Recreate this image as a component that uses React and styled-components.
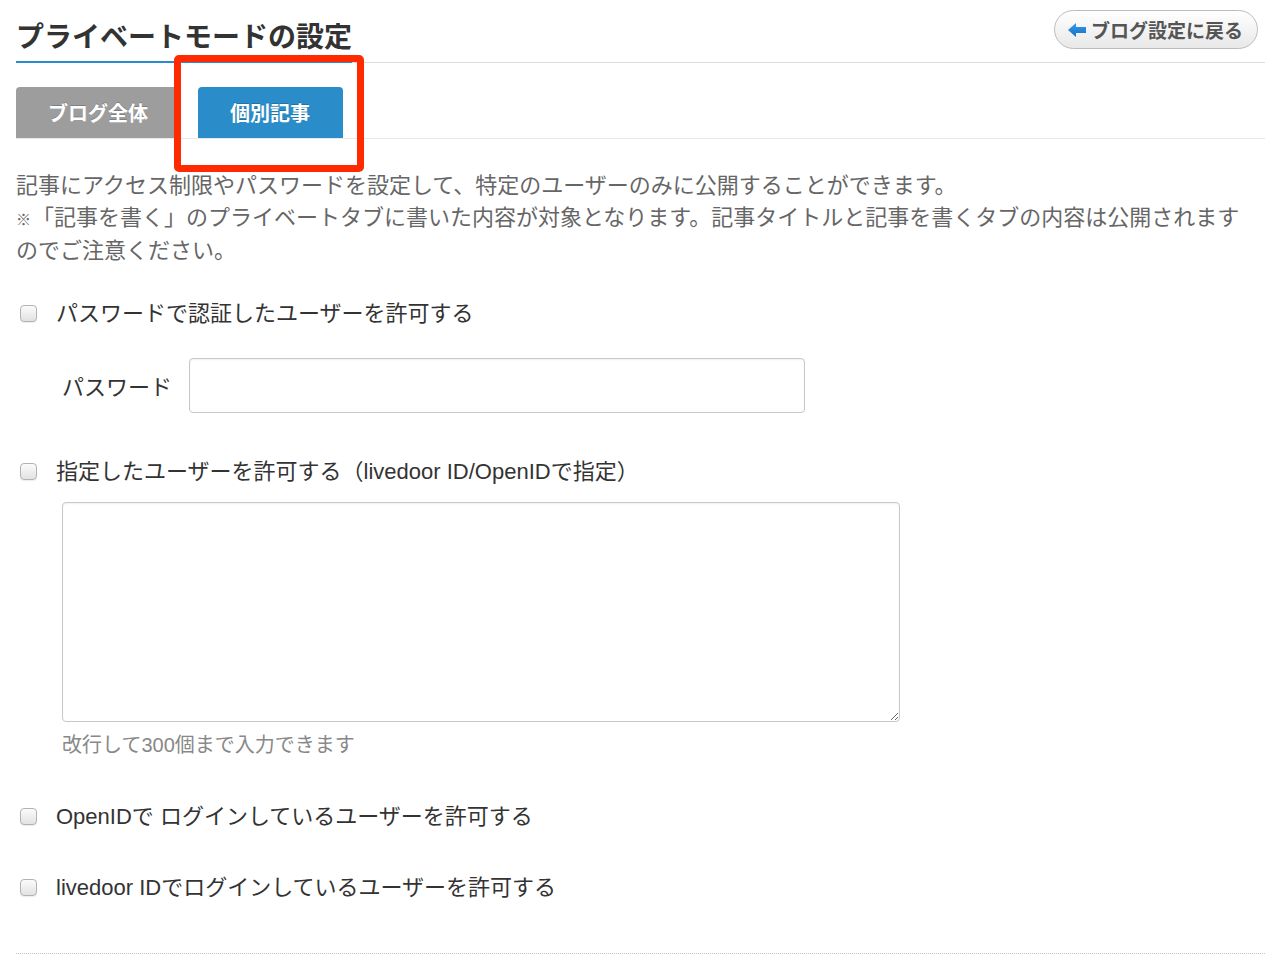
import React from "react";
import styled, { createGlobalStyle } from "styled-components";

const GlobalStyle = createGlobalStyle`
  body {
    margin: 0;
    background: #fff;
    font-family: "Liberation Sans", "Noto Sans CJK JP", sans-serif;
    color: #333;
  }
`;

const Page = styled.div`
  position: relative;
  padding: 0 15px 0 16px;
`;

const Header = styled.div`
  display: flex;
  justify-content: space-between;
  align-items: flex-start;
  border-bottom: 1px solid #dcdcdc;
  height: 62px;
`;

const Title = styled.h1`
  margin: 0 0 -1px;
  padding: 20px 0 5px;
  font-size: 28px;
  line-height: 36px;
  font-weight: bold;
  color: #333;
  border-bottom: 2px solid #2a8cd0;
`;

const BackButton = styled.a`
  display: flex;
  align-items: center;
  gap: 5px;
  margin: 10px 7px 0 0;
  height: 39px;
  box-sizing: border-box;
  padding: 0 14px 0 13px;
  border: 1px solid #bcbcbc;
  border-radius: 20px;
  background: linear-gradient(#ffffff, #e8e8e8);
  box-shadow: inset 0 1px 0 #fff;
  color: #555;
  font-size: 19px;
  font-weight: bold;
  text-decoration: none;
`;

const Tabs = styled.div`
  display: flex;
  gap: 17px;
  margin-top: 24px;
  border-bottom: 1px solid #e8e8e8;
`;

const Tab = styled.div`
  height: 51px;
  display: flex;
  align-items: center;
  padding: 0 33px 0 32px;
  border-radius: 4px 4px 0 0;
  background: ${(p) => (p.active ? "#2a8dc9" : "#9d9d9d")};
  color: #fff;
  font-size: 20px;
  font-weight: bold;
  text-shadow: 0 -1px 0 rgba(0, 0, 0, 0.2);
`;

const Callout = styled.div`
  position: absolute;
  left: 174px;
  top: 55px;
  width: 190px;
  height: 117px;
  box-sizing: border-box;
  border: 7px solid #ff2a00;
  border-radius: 5px;
  pointer-events: none;
`;

const Description = styled.p`
  margin: 31px 0 0;
  padding-right: 8px;
  font-size: 22px;
  line-height: 31.5px;
  color: #666;
`;

const Note = styled.span`
  font-size: 15px;
  font-weight: bold;
  margin-right: 1px;
`;

const CheckRow = styled.label`
  display: flex;
  align-items: center;
  gap: 19px;
  margin-top: ${(p) => p.gap}px;
  padding-left: 4px;
  font-size: 22px;
  line-height: 32px;
  color: #333;
`;

const Check = styled.input.attrs({ type: "checkbox" })`
  appearance: none;
  margin: 0;
  width: 17px;
  height: 17px;
  border: 1px solid #b3b3b3;
  border-radius: 4px;
  background: linear-gradient(#fbfbfb, #e2e2e2);
  box-shadow: 0 1px 1px rgba(0, 0, 0, 0.08);
`;

const FieldRow = styled.div`
  display: flex;
  align-items: center;
  gap: 17px;
  margin-top: 28px;
  padding-left: 46px;
`;

const FieldLabel = styled.span`
  font-size: 22px;
  color: #333;
`;

const TextInput = styled.input`
  width: 616px;
  height: 55px;
  box-sizing: border-box;
  border: 1px solid #c8c8c8;
  border-radius: 4px;
  box-shadow: inset 0 1px 2px rgba(0, 0, 0, 0.06);
  font-size: 20px;
  padding: 0 10px;
`;

const Indent = styled.div`
  padding-left: 46px;
  margin-top: 14px;
`;

const Area = styled.textarea`
  display: block;
  width: 838px;
  height: 220px;
  box-sizing: border-box;
  border: 1px solid #c8c8c8;
  border-radius: 4px;
  box-shadow: inset 0 1px 2px rgba(0, 0, 0, 0.06);
  font-size: 20px;
`;

const Hint = styled.div`
  margin-top: 9px;
  font-size: 20px;
  line-height: 28px;
  color: #888;
`;

const Divider = styled.hr`
  margin: 49px 0 0;
  border: 0;
  border-top: 1px dotted #c4c4c4;
`;

const BackArrow = () => (
  <svg width="18" height="14" viewBox="0 0 18 14">
    <defs>
      <linearGradient id="ba" x1="0" y1="0" x2="0" y2="1">
        <stop offset="0" stopColor="#3b9be6" />
        <stop offset="1" stopColor="#1270c4" />
      </linearGradient>
    </defs>
    <path d="M0 7 L8 0 V4 H18 V10 H8 V14 Z" fill="url(#ba)" />
  </svg>
);

export default function App() {
  return (
    <Page>
      <GlobalStyle />
      <Header>
        <Title>プライベートモードの設定</Title>
        <BackButton href="#">
          <BackArrow />
          ブログ設定に戻る
        </BackButton>
      </Header>

      <Tabs>
        <Tab>ブログ全体</Tab>
        <Tab active>個別記事</Tab>
      </Tabs>
      <Callout />

      <Description>
        記事にアクセス制限やパスワードを設定して、特定のユーザーのみに公開することができます。
        <br />
        <Note>※</Note>「記事を書く」のプライベートタブに書いた内容が対象となります。記事タイトルと記事を書くタブの内容は公開されますのでご注意ください。
      </Description>

      <CheckRow gap={31}>
        <Check />
        パスワードで認証したユーザーを許可する
      </CheckRow>
      <FieldRow>
        <FieldLabel>パスワード</FieldLabel>
        <TextInput type="text" />
      </FieldRow>

      <CheckRow gap={43}>
        <Check />
        指定したユーザーを許可する（livedoor ID/OpenIDで指定）
      </CheckRow>
      <Indent>
        <Area />
        <Hint>改行して300個まで入力できます</Hint>
      </Indent>

      <CheckRow gap={42}>
        <Check />
        OpenIDで ログインしているユーザーを許可する
      </CheckRow>
      <CheckRow gap={39}>
        <Check />
        livedoor IDでログインしているユーザーを許可する
      </CheckRow>

      <Divider />
    </Page>
  );
}
